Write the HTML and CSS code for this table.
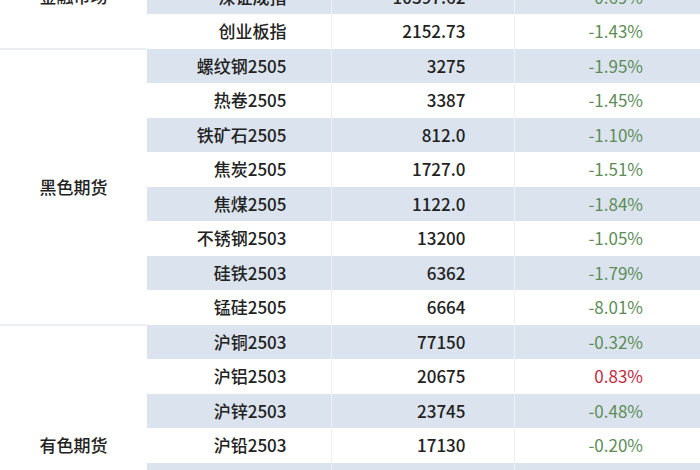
FILE: index.html
```html
<!DOCTYPE html>
<html lang="zh-CN">
<head>
<meta charset="utf-8">
<title>行情表</title>
<link rel="stylesheet" href="styles.css">
</head>
<body>
<table class="quotes">
  <colgroup>
    <col class="c-cat"><col class="c-name"><col class="c-val"><col class="c-pct">
  </colgroup>
  <tbody>
    <tr class="odd last-no"><td class="cat" rowspan="3">金融市场</td><td class="name">上证指数</td><td class="val">3276.38</td><td class="pct dn">-0.19%</td></tr>
    <tr class="even"><td class="name">深证成指</td><td class="val">10397.62</td><td class="pct dn">-0.69%</td></tr>
    <tr class="odd"><td class="name">创业板指</td><td class="val">2152.73</td><td class="pct dn">-1.43%</td></tr>

    <tr class="even"><td class="cat" rowspan="8">黑色期货</td><td class="name">螺纹钢2505</td><td class="val">3275</td><td class="pct dn">-1.95%</td></tr>
    <tr class="odd"><td class="name">热卷2505</td><td class="val">3387</td><td class="pct dn">-1.45%</td></tr>
    <tr class="even"><td class="name">铁矿石2505</td><td class="val">812.0</td><td class="pct dn">-1.10%</td></tr>
    <tr class="odd"><td class="name">焦炭2505</td><td class="val">1727.0</td><td class="pct dn">-1.51%</td></tr>
    <tr class="even"><td class="name">焦煤2505</td><td class="val">1122.0</td><td class="pct dn">-1.84%</td></tr>
    <tr class="odd"><td class="name">不锈钢2503</td><td class="val">13200</td><td class="pct dn">-1.05%</td></tr>
    <tr class="even"><td class="name">硅铁2503</td><td class="val">6362</td><td class="pct dn">-1.79%</td></tr>
    <tr class="odd"><td class="name">锰硅2505</td><td class="val">6664</td><td class="pct dn">-8.01%</td></tr>

    <tr class="even"><td class="cat" rowspan="7">有色期货</td><td class="name">沪铜2503</td><td class="val">77150</td><td class="pct dn">-0.32%</td></tr>
    <tr class="odd"><td class="name">沪铝2503</td><td class="val">20675</td><td class="pct up">0.83%</td></tr>
    <tr class="even"><td class="name">沪锌2503</td><td class="val">23745</td><td class="pct dn">-0.48%</td></tr>
    <tr class="odd"><td class="name">沪铅2503</td><td class="val">17130</td><td class="pct dn">-0.20%</td></tr>
    <tr class="even"><td class="name">沪镍2503</td><td class="val">124350</td><td class="pct dn">-1.12%</td></tr>
    <tr class="odd"><td class="name">沪锡2503</td><td class="val">254800</td><td class="pct dn">-0.66%</td></tr>
    <tr class="even"><td class="name">氧化铝2505</td><td class="val">3870</td><td class="pct dn">-2.07%</td></tr>
  </tbody>
</table>
</body>
</html>
```

FILE: styles.css
```css
html, body {
  margin: 0;
  padding: 0;
  background: #ffffff;
  overflow: hidden;
}

body {
  font-family: "Noto Sans CJK SC", "Noto Sans", sans-serif;
  color: #222222;
}

.quotes {
  width: 700px;
  margin-top: -55px;
  border-collapse: collapse;
  table-layout: fixed;
  font-size: 17px;
}

.c-cat { width: 147px; }
.c-name { width: 184px; }
.c-val { width: 183px; }
.c-pct { width: 186px; }

.quotes td {
  height: 34.5px;
  padding: 0;
  line-height: 20px;
  vertical-align: middle;
  box-sizing: border-box;
}

.quotes tr.even td { background: #dbe4ee; }
.quotes tr.odd td { background: #ffffff; }

.quotes td.cat {
  background: #ffffff !important;
  text-align: center;
  font-weight: 500;
  border-bottom: 2px solid #eceff2;
}

.name {
  text-align: right;
  padding-right: 44px !important;
  font-weight: 500;
}

.val {
  text-align: right;
  padding-right: 48px !important;
  font-weight: 500;
  border-left: 1px solid #edf0f4;
}

.pct {
  text-align: right;
  padding-right: 57px !important;
  font-weight: 400;
  border-left: 1px solid #edf0f4;
}

.pct.dn { color: #5e8c58; }
.pct.up { color: #c22a3e; }
```
